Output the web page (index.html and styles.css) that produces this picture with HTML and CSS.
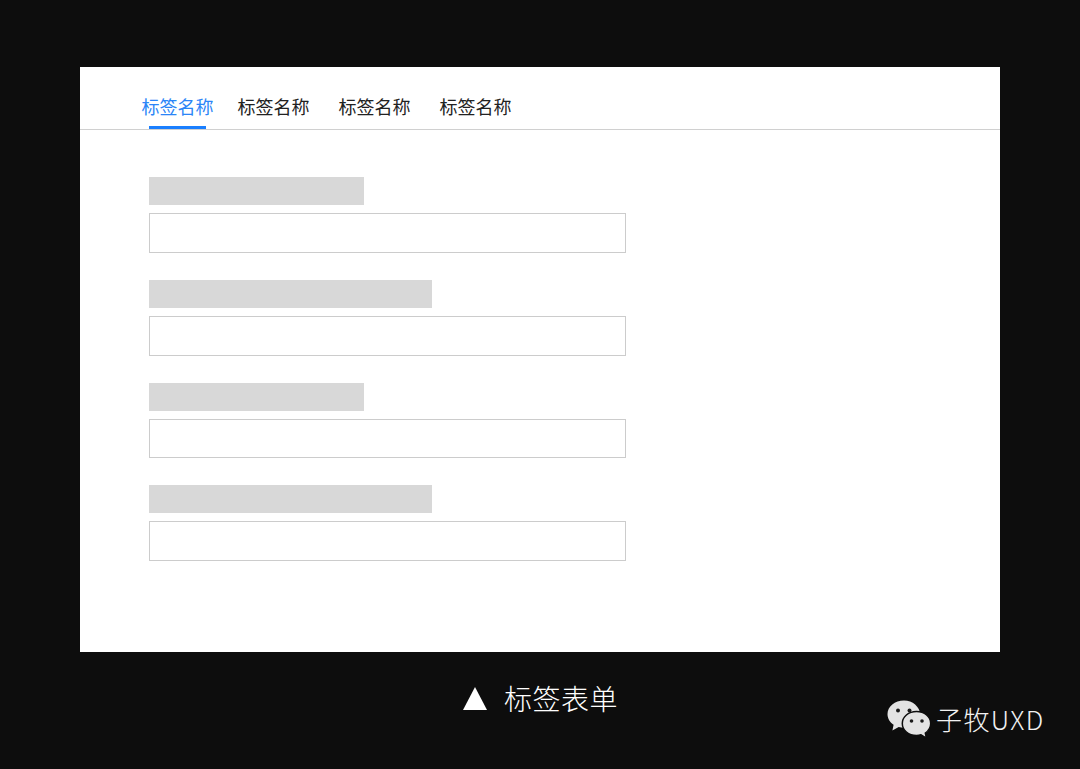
FILE: index.html
```html
<!DOCTYPE html>
<html lang="zh">
<head>
<meta charset="utf-8">
<title>标签表单</title>
<link rel="stylesheet" href="styles.css">
</head>
<body>
<main class="card">
  <nav class="tabs">
    <span class="tab tab-active">标签名称</span>
    <span class="tab">标签名称</span>
    <span class="tab">标签名称</span>
    <span class="tab">标签名称</span>
  </nav>
  <form class="form">
    <div class="field"><div class="label label-short"></div><div class="input"></div></div>
    <div class="field"><div class="label label-long"></div><div class="input"></div></div>
    <div class="field"><div class="label label-short"></div><div class="input"></div></div>
    <div class="field"><div class="label label-long"></div><div class="input"></div></div>
  </form>
</main>
<footer class="caption">
  <svg class="triangle" width="24" height="23" viewBox="0 0 24 23"><path d="M12 0 24 23H0Z" fill="#fff"/></svg>
  <span class="caption-text">标签表单</span>
</footer>
<div class="watermark">
  <svg class="wechat" width="44" height="39" viewBox="0 0 44 39">
    <path d="M17 0.5C7.900.5.500 6.600.500 14.200c0 4.300 2.400 8.100 6.100 10.600L5.400 30.500l6.300-3.400c1.700.5 3.500.700 5.300.700 8.500 0 15.700-5.700 16.400-13C32.700 6.600 25.600.5 17 .5Z" fill="#e3e3e3"/>
    <circle cx="11" cy="10.500" r="2" fill="#1a1a1a"/>
    <circle cx="22.500" cy="10.500" r="2" fill="#1a1a1a"/>
    <path d="M29.500 11.500c-8 0-14.200 5.300-14.200 12s6.200 12 14.200 12c1.600 0 3.100-.2 4.500-.7l5.400 3.400-1.100-5.200c3.300-2.200 5.400-5.600 5.400-9.500 0-6.700-6.200-12-14.200-12Z" fill="#e3e3e3" stroke="#0d0d0d" stroke-width="1.500"/>
    <circle cx="24.500" cy="21" r="1.800" fill="#1a1a1a"/>
    <circle cx="35" cy="21" r="1.800" fill="#1a1a1a"/>
  </svg>
  <span class="watermark-text">子牧UXD</span>
</div>
</body>
</html>
```
FILE: styles.css
```css
* { box-sizing: border-box; }
html, body { margin: 0; height: 100%; }
body {
  position: relative;
  width: 1080px;
  height: 769px;
  overflow: hidden;
  background: #0d0d0d;
  padding: 67px 80px 0;
  font-family: "Noto Sans CJK SC", "Noto Sans", sans-serif;
}
.card {
  width: 920px;
  height: 585px;
  background: #fff;
}
.tabs {
  display: flex;
  gap: 29px;
  height: 63px;
  padding: 26px 0 0 61.500px;
  border-bottom: 1px solid #d0d0d0;
}
.tab {
  position: relative;
  font-size: 18px;
  line-height: 26px;
  color: #222;
}
.tab-active {
  color: #2b85f7;
  margin-right: -5px;
}
.tab-active::after {
  content: "";
  position: absolute;
  left: 7.500px;
  width: 57px;
  top: 33px;
  height: 3px;
  background: #1a7fff;
}
.form {
  display: flex;
  flex-direction: column;
  gap: 27px;
  padding: 47px 0 0 69px;
}
.field {
  display: flex;
  flex-direction: column;
  gap: 8px;
  height: 75.750px;
}
.label { height: 28px; background: #d8d8d8; }
.label-short { width: 215px; }
.label-long { width: 283px; }
.input {
  width: 477px;
  height: 39.750px;
  background: #fff;
  border: 1px solid #ccc;
}
.caption {
  display: flex;
  align-items: center;
  margin-left: 383px;
  margin-top: 26px;
  height: 40px;
  gap: 17px;
  color: #fff;
}
.caption-text { font-size: 28px; line-height: 40px; font-weight: 300; letter-spacing: .5px; }
.triangle { display: block; }
.watermark {
  position: absolute;
  left: 887px;
  top: 699px;
  display: flex;
  align-items: center;
  gap: 5px;
  color: #f2f2f2;
}
.wechat { display: block; }
.watermark-text { font-size: 26px; line-height: 40px; font-weight: 300; letter-spacing: 1.400px; }
```
